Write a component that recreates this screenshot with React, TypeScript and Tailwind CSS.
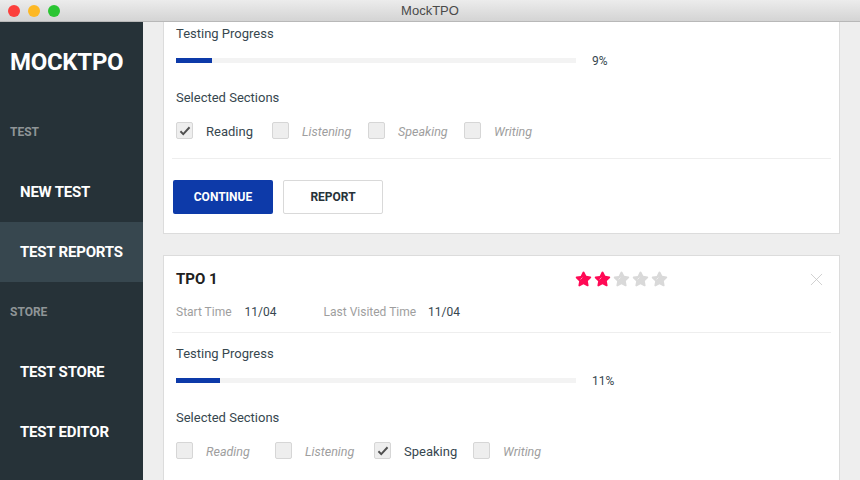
import { X } from 'lucide-react'

type Section = { name: string; checked: boolean }

const font = { fontFamily: 'Roboto, "Liberation Sans", sans-serif' }

function Star({ on }: { on: boolean }) {
  return (
    <svg width="19" height="19" viewBox="0 0 24 24" aria-hidden="true">
      <path
        d="M12 1.8c.5 0 .9.3 1.1.7l2.4 4.9 5.3.8c1 .1 1.3 1.3.6 2l-3.9 3.8.9 5.3c.2 1-.8 1.7-1.7 1.2L12 18.1l-4.7 2.5c-.9.5-1.9-.2-1.700-1.2l.9-5.3-3.9-3.8c-.7-.7-.4-1.9.6-2l5.3-.8 2.4-4.9c.2-.4.6-.7 1.1-.7z"
        fill={on ? '#ff0a55' : '#d9d9d9'}
      />
      <path d="M8.6 11.6l1.6-1.6" stroke="#ffffff" strokeOpacity="0.7" strokeWidth="1" strokeLinecap="round" />
    </svg>
  )
}

function Checkbox({ checked }: { checked: boolean }) {
  return (
    <span className="flex h-[17px] w-[17px] shrink-0 items-center justify-center rounded-[2px] border border-[#d6d6d6] bg-[#eeeeee]">
      {checked && (
        <svg width="14" height="14" viewBox="0 0 16 16" aria-hidden="true">
          <path d="M2.8 8.3l3.2 3.2 7.2-7.8" fill="none" stroke="#505050" strokeWidth="2.2" />
        </svg>
      )}
    </span>
  )
}

function TestCard({
  title,
  stars,
  progress,
  sections,
  itemWidth,
  buttons,
  className = '',
}: {
  title: string
  stars: number
  progress: number
  sections: Section[]
  itemWidth: string
  buttons?: boolean
  className?: string
}) {
  return (
    <div className={`border border-[#dcdcdc] bg-white px-[8px] ${className}`}>
      <div className="flex h-[46px] items-center px-[4px]">
        <h2 className="w-[398px] text-[15px] font-bold text-[#212121]">{title}</h2>
        <div className="flex">
          {[0, 1, 2, 3, 4].map(i => <Star key={i} on={i < stars} />)}
        </div>
        <X size={21} strokeWidth={0.9} className="ml-auto mr-0 text-[#c4c4c4]" />
      </div>
      <div className="flex h-[20px] items-center px-[4px] text-[12px]">
        <span className="text-[#9e9e9e]">Start Time</span>
        <span className="ml-[13px] w-[79px] text-[#37474f]">11/04</span>
        <span className="text-[#9e9e9e]">Last Visited Time</span>
        <span className="ml-[12px] text-[#37474f]">11/04</span>
      </div>
      <div className="mt-[10px] border-t border-[#eeeeee]" />
      <div className="px-[4px]">
        <div className="flex h-[42px] items-center text-[13px] text-[#37474f]">Testing Progress</div>
        <div className="mt-[3px] flex h-[5px] items-center">
          <div className="h-[5px] w-[400px] bg-[#f3f3f3]">
            <div className="h-full bg-[#0d3aa9]" style={{ width: `${progress}%` }} />
          </div>
          <span className="ml-[16px] text-[12px] text-[#37474f]">{progress}%</span>
        </div>
        <div className="mt-[25px] flex h-[20px] items-center text-[13px] text-[#37474f]">Selected Sections</div>
        <div className="mt-[14px] flex h-[17px] items-center">
          {sections.map(s => (
            <div key={s.name} className={`flex items-center ${itemWidth}`}>
              <Checkbox checked={s.checked} />
              <span
                className={`ml-[13px] mt-[3px] ${s.checked ? 'text-[13px] text-[#37474f]' : 'text-[12.5px] italic text-[#9e9e9e]'}`}
              >
                {s.name}
              </span>
            </div>
          ))}
        </div>
      </div>
      {buttons && (
        <>
          <div className="mt-[19px] border-t border-[#eeeeee]" />
          <div className="flex gap-[10px] pb-[19px] pt-[21px] pl-[1px]">
            <button className="h-[34px] w-[100px] rounded-[2px] bg-[#0d3aa9] text-[12px] font-bold text-white">
              CONTINUE
            </button>
            <button className="h-[34px] w-[100px] rounded-[2px] border border-[#d9d9d9] bg-white text-[12px] font-bold text-[#263238]">
              REPORT
            </button>
          </div>
        </>
      )}
      {!buttons && <div className="h-[40px]" />}
    </div>
  )
}

function NavLabel({ children }: { children: string }) {
  return <div className="flex h-[60px] items-center px-[10px] text-[12px] font-bold text-[#8f9597]">{children}</div>
}

function NavItem({ children, active }: { children: string; active?: boolean }) {
  return (
    <div
      className={`flex h-[60px] items-center whitespace-nowrap px-[20px] text-[15px] font-bold tracking-[-0.2px] text-white ${active ? 'bg-[#37474f]' : ''}`}
    >
      {children}
    </div>
  )
}

export default function App() {
  return (
    <div className="flex h-[480px] w-[860px] flex-col overflow-hidden bg-[#eeeeee]" style={font}>
      <div className="relative flex h-[22px] shrink-0 items-center justify-center border-b border-[#b8b8b8] bg-gradient-to-b from-[#ececec] to-[#d4d4d4]">
        <div className="absolute left-[8px] top-[5px] flex gap-[8px]">
          <span className="h-[12px] w-[12px] rounded-full bg-[#fc3f3c]" />
          <span className="h-[12px] w-[12px] rounded-full bg-[#fdb824]" />
          <span className="h-[12px] w-[12px] rounded-full bg-[#2ac532]" />
        </div>
        <span className="text-[13px] text-[#4a4a4a]" style={{ fontFamily: '"Liberation Sans", Arial, sans-serif' }}>
          MockTPO
        </span>
      </div>
      <div className="flex min-h-0 flex-1">
        <aside className="w-[143px] shrink-0 bg-[#263238]">
          <div className="flex h-[80px] items-center px-[10px] text-[24px] font-bold tracking-[-0.3px] text-white">MOCKTPO</div>
          <NavLabel>TEST</NavLabel>
          <NavItem>NEW TEST</NavItem>
          <NavItem active>TEST REPORTS</NavItem>
          <NavLabel>STORE</NavLabel>
          <NavItem>TEST STORE</NavItem>
          <NavItem>TEST EDITOR</NavItem>
        </aside>
        <main className="min-w-0 flex-1 overflow-hidden px-[20px]">
          <TestCard
            className="mt-[-87px]"
            title="TPO 2"
            stars={3}
            progress={9}
            itemWidth="w-[96px]"
            buttons
            sections={[
              { name: 'Reading', checked: true },
              { name: 'Listening', checked: false },
              { name: 'Speaking', checked: false },
              { name: 'Writing', checked: false },
            ]}
          />
          <TestCard
            className="mt-[21px]"
            title="TPO 1"
            stars={2}
            progress={11}
            itemWidth="w-[99px]"
            sections={[
              { name: 'Reading', checked: false },
              { name: 'Listening', checked: false },
              { name: 'Speaking', checked: true },
              { name: 'Writing', checked: false },
            ]}
          />
        </main>
      </div>
    </div>
  )
}
